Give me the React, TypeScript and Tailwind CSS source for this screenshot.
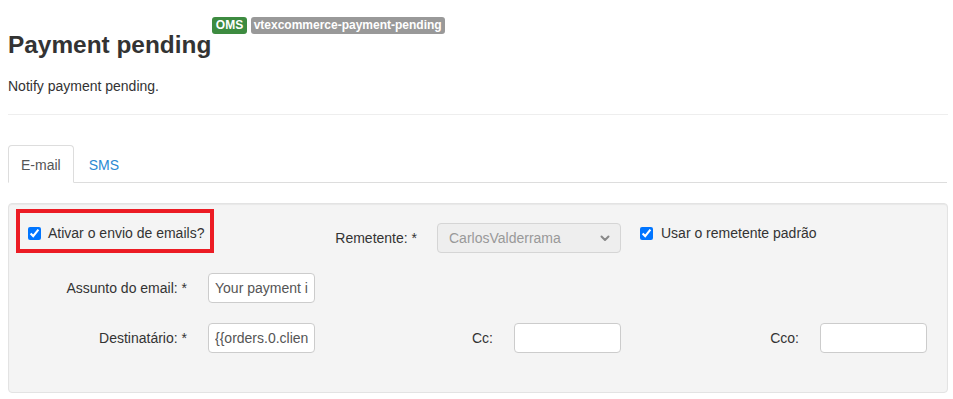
import React from "react";

function Check() {
  return (
    <input
      type="checkbox"
      defaultChecked
      className="m-0 w-[13px] h-[13px] shrink-0"
    />
  );
}

function Field({ label, value }: { label: string; value: string }) {
  return (
    <div className="flex items-center">
      <label className="w-[170px] text-right leading-[20px]">{label}</label>
      <input
        readOnly
        value={value}
        className="ml-[21px] w-[107px] h-[30px] px-[6px] bg-white border border-[#cccccc] rounded-[4px] text-[#555] text-[14px] outline-none"
      />
    </div>
  );
}

export default function App() {
  return (
    <div className="px-[8px] w-[956px] font-['Liberation_Sans',Arial,sans-serif] text-[14px] text-[#333]">
      <div className="pt-[17px] flex items-start">
        <h1 className="mt-[15px] text-[24.4px] leading-[26px] font-bold text-[#333]">
          Payment pending
        </h1>
        <div className="ml-[1px] flex gap-[4px]">
          <span className="h-[17px] px-[3.5px] rounded-[3px] bg-[#3d8b40] text-white text-[12px] font-bold leading-[17px]">
            OMS
          </span>
          <span className="h-[17px] px-[3px] rounded-[3px] bg-[#999999] text-white text-[12px] font-bold leading-[17px]">
            vtexcommerce-payment-pending
          </span>
        </div>
      </div>
      <p className="mt-[18px] leading-[20px]">Notify payment pending.</p>
      <div className="mt-[18px] border-t border-[#eeeeee] w-[940px]" />

      <div className="mt-[30px] flex border-b border-[#dddddd] w-[939px]">
        <div className="-mb-px pt-[9px] pb-[7px] px-[12px] leading-[20px] bg-white border border-[#dddddd] border-b-transparent rounded-t-[4px] text-[#555]">
          E-mail
        </div>
        <div className="-mb-px ml-[2px] pt-[9px] pb-[7px] px-[12px] leading-[20px] border border-transparent text-[#2b8ad3]">
          SMS
        </div>
      </div>

      <div className="mt-[20px] w-[940px] bg-[#f4f4f4] border border-[#e3e3e3] rounded-[4px] shadow-[inset_0_1px_1px_rgba(0,0,0,0.05)] pl-[8px] pb-[39px]">
        <div className="grid grid-cols-[306px_306px_306px] items-start">
          <div className="mt-[5px] -ml-[1px] w-[198px] h-[44px] border-[4px] border-[#ec1c24] pt-[10px] pl-[8px] flex items-start">
            <div className="h-[20px] flex items-center gap-[7px] leading-[20px]">
              <Check />
              <span>Ativar o envio de emails?</span>
            </div>
          </div>
          <div className="mt-[19px] flex items-center">
            <label className="w-[94px] text-right leading-[20px]">Remetente: *</label>
            <div className="ml-[20px] w-[184px] h-[30px] flex items-center justify-between pl-[11px] pr-[10px] bg-[#eeeeee] border border-[#d5d5d5] rounded-[4px] text-[#999]">
              <span>CarlosValderrama</span>
              <svg width="10" height="7" viewBox="0 0 10 7">
                <polyline
                  points="1.5,1.5 5,5 8.5,1.5"
                  fill="none"
                  stroke="#888"
                  strokeWidth="2"
                  strokeLinecap="round"
                  strokeLinejoin="round"
                />
              </svg>
            </div>
          </div>
          <div className="mt-[19px] pl-[11px] h-[20px] flex items-center gap-[8px] leading-[20px]">
            <Check />
            <span>Usar o remetente padrão</span>
          </div>
        </div>

        <div className="mt-[20px] grid grid-cols-[306px_306px_306px]">
          <Field label="Assunto do email: *" value="Your payment is pending" />
        </div>

        <div className="mt-[20px] grid grid-cols-[306px_306px_306px]">
          <Field label="Destinatário: *" value="{{orders.0.clientProfileData.email}}" />
          <Field label="Cc:" value="" />
          <Field label="Cco:" value="" />
        </div>
      </div>
    </div>
  );
}
